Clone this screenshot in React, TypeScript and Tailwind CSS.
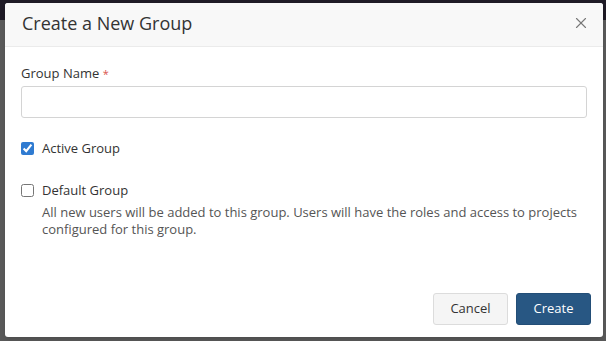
import { X } from 'lucide-react';

export default function App() {
  return (
    <div className="relative h-[341px] w-[606px] overflow-hidden bg-[#5a5a5a] font-['Open_Sans',sans-serif]">
      {/* backdrop band */}
      <div className="h-[20px] w-full bg-[#1f1b26]" />

      {/* Modal */}
      <div className="absolute left-[5px] top-[3px] flex h-[334px] w-[598px] flex-col rounded-[3px] bg-white shadow-md">
        <div className="flex h-[44px] items-center justify-between rounded-t-[3px] border-b border-[#ebebeb] bg-[#f8f8f8] pb-[3px] pl-[17px] pr-[12px]">
          <h2 className="text-[18px] font-normal text-[#333]">Create a New Group</h2>
          <button type="button" className="flex h-5 w-5 items-center justify-center text-[#777]">
            <X size={18} strokeWidth={1.5} />
          </button>
        </div>

        <div className="flex flex-1 flex-col px-[16px] pt-[17px]">
          <label className="text-[13px] font-medium text-[#333]">
            Group Name <span className="text-[11px] text-[#d9534f]">*</span>
          </label>
          <input
            type="text"
            className="mt-[2px] h-[32px] w-full rounded-[3px] border border-[#d4d4d4] bg-white px-2 text-[13px] outline-none"
          />

          <label className="mt-[21px] flex items-center gap-[8px] text-[13px] font-medium text-[#333]">
            <input type="checkbox" defaultChecked className="h-[13px] w-[13px] accent-[#2f7bd1]" />
            Active Group
          </label>

          <label className="mt-[23px] flex items-center gap-[8px] text-[13px] font-medium text-[#333]">
            <input type="checkbox" className="h-[13px] w-[13px]" />
            Default Group
          </label>
          <p className="mt-[3px] pl-[21px] text-[13px]/[17px] text-[#555]">
            All new users will be added to this group. Users will have the roles and access to projects
            configured for this group.
          </p>
        </div>

        <div className="flex justify-end gap-[8px] px-[12px] pb-[12px]">
          <button
            type="button"
            className="h-[32px] w-[75px] rounded-[3px] border border-[#dcdcdc] bg-[#f5f5f5] text-[13px] text-[#333]"
          >
            Cancel
          </button>
          <button
            type="button"
            className="h-[32px] w-[75px] rounded-[3px] border border-[#234e77] bg-[#285783] text-[13px] text-white"
          >
            Create
          </button>
        </div>
      </div>
    </div>
  );
}
